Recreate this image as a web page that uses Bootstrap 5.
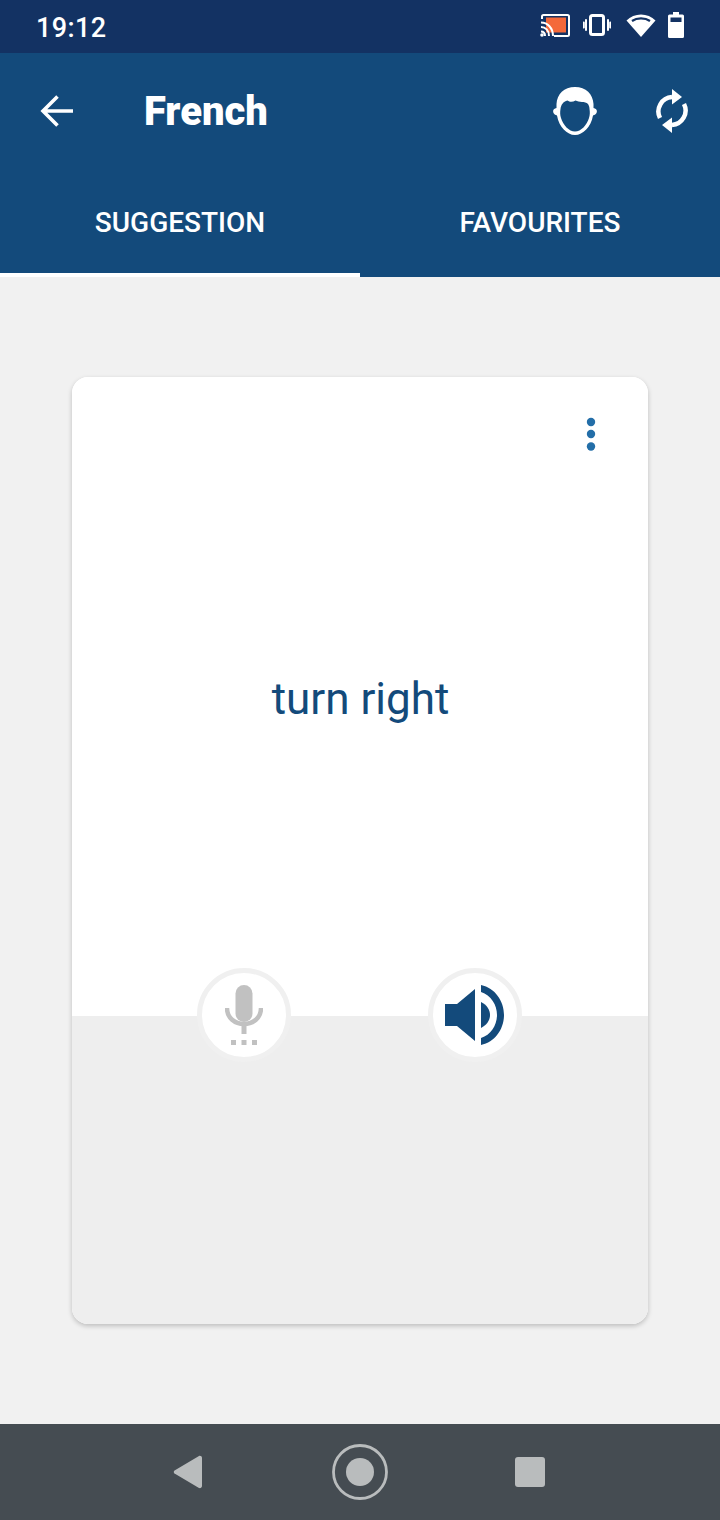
<!DOCTYPE html>
<html lang="en">
<head>
    <meta charset="UTF-8">
    <meta name="viewport" content="width=device-width, initial-scale=1.0">
    <title>French</title>
    <link href="https://cdn.jsdelivr.net/npm/bootstrap@5.3.0/dist/css/bootstrap.min.css" rel="stylesheet">
    <style>
        html, body {
            height: 100%;
        }
        body {
            background-color: #f1f1f1;
            font-family: Roboto, "Liberation Sans", sans-serif;
            overflow: hidden;
        }
        .phone {
            height: 1520px;
        }
        .status-bar {
            height: 53px;
            background-color: #133263;
            padding: 0 36px 0 36px;
        }
        .status-time {
            font-size: 27px;
            font-weight: 500;
            letter-spacing: .4px;
            padding-top: 3px;
        }
        .status-icons {
            padding-bottom: 3px;
        }
        .app-bar {
            background-color: #134a7b;
        }
        .tool-row {
            height: 115px;
            padding: 0 31px 0 40px;
        }
        .app-title {
            font-size: 40px;
            font-weight: 900;
            margin: 2px 0 0 71px;
            line-height: 1;
        }
        .tab-row {
            height: 109px;
        }
        .tab-item {
            width: 50%;
            padding-top: 4px;
            font-size: 28px;
            font-weight: 500;
            color: #fff;
            border-bottom: 4px solid transparent;
        }
        .tab-item.on {
            border-bottom-color: #fff;
        }
        .page-body {
            padding: 100px 72px;
        }
        .word-card {
            border: 0;
            border-radius: 16px;
            box-shadow: 0 2px 5px rgba(0, 0, 0, .22);
            overflow: visible;
        }
        .word-top {
            height: 639px;
            background-color: #fff;
            border-radius: 16px 16px 0 0;
            padding: 40px 51px 0 0;
        }
        .word-text {
            font-size: 44px;
            color: #134a7b;
            margin-top: 222px;
            margin-left: 52px;
            line-height: 1.2;
        }
        .word-bottom {
            height: 308px;
            background-color: #eeeeee;
            border-radius: 0 0 16px 16px;
        }
        .round-btn {
            position: absolute;
            top: 591px;
            width: 94px;
            height: 94px;
            background-color: #fff;
            border: 5px solid #f0f0f0;
            border-radius: 50%;
        }
        .round-mic {
            left: 125px;
        }
        .round-speaker {
            left: 356px;
        }
        .nav-bar {
            height: 96px;
            padding-right: 2px;
            background-color: #454c52;
        }
        .vib-icon { margin-left: 13px; }
        .wifi-icon { margin-left: 15px; }
        .batt-icon { margin-left: 12px; }
        .sync-icon { margin-left: 58px; }
        .nav-back { margin-right: 129px; }
        .nav-square { margin-left: 127px; }
    </style>
</head>
<body>
    <div class="phone d-flex flex-column">
        <div class="status-bar d-flex align-items-center justify-content-between text-white">
            <span class="status-time">19:12</span>
            <div class="status-icons d-flex align-items-center">
                <svg width="30" height="24" viewBox="0 0 30 24">
                    <rect x="6" y="4.500" width="20" height="15" fill="#f4693a"/>
                    <path d="M2 6V3.500A1.500 1.500 0 0 1 3.500 2H27.500A1.500 1.500 0 0 1 29 3.500V21.500A1.500 1.500 0 0 1 27.500 23H14" fill="none" stroke="#fff" stroke-width="2"/>
                    <path d="M1 9.500C7.500 9.500 13 15 13 23M1 14C5.500 14 9 17.500 9 23M1 18.500C3.500 18.500 5 20.500 5 23" fill="none" stroke="#fff" stroke-width="2"/>
                    <circle cx="2" cy="22" r="1.800" fill="#fff"/>
                </svg>
                <svg width="28" height="22" viewBox="0 0 28 22" class="vib-icon">
                    <rect x="7.500" y="1.500" width="13" height="19" rx="2" fill="none" stroke="#fff" stroke-width="3"/>
                    <path d="M3 6V16M0.800 8.500V13.500M25 6V16M27.200 8.500V13.500" stroke="#fff" stroke-width="2" stroke-linecap="round"/>
                </svg>
                <svg width="30" height="26" viewBox="0 0 30 26" class="wifi-icon">
                    <path d="M15 25L0.500 8.500C8 0.500 22 0.500 29.500 8.500Z" fill="#fff"/>
                    <path d="M6 9C11 5.500 19 5.500 24 9" fill="none" stroke="#133263" stroke-width="2.200"/>
                </svg>
                <svg width="16" height="26" viewBox="0 0 16 26" class="batt-icon">
                    <path d="M5 0H11V2.500H14.500A1.500 1.500 0 0 1 16 4V24.500A1.500 1.500 0 0 1 14.500 26H1.500A1.500 1.500 0 0 1 0 24.500V4A1.500 1.500 0 0 1 1.500 2.500H5Z" fill="#fff"/>
                    <rect x="2.500" y="5.500" width="11" height="4.500" fill="#133263"/>
                </svg>
            </div>
        </div>

        <div class="app-bar text-white">
            <div class="tool-row d-flex align-items-center">
                <svg width="33" height="34" viewBox="0 0 33 34">
                    <path d="M33 17H3.500M17.500 2.500L3 17L17.500 31.500" fill="none" stroke="#fff" stroke-width="3.600"/>
                </svg>
                <h1 class="app-title">French</h1>
                <svg class="face-icon ms-auto" width="44" height="48" viewBox="0 0 44 48">
                    <path d="M22 0C33 0 40 7 40.500 17L40.500 21C43.500 21.500 44.500 23.500 43.500 26C42.500 27.500 41.500 28 40 28.500C38 40 30 48 22 48C14 48 6 40 4 28.500C2.500 28 1.500 27.500 0.500 26C-0.500 23.500 0.500 21.500 3.500 21L3.500 17C4 7 11 0 22 0Z" fill="#fff"/>
                    <path d="M7.500 22C8 18 10 14.500 14.500 13.500C17 15.500 20 15 22.500 13.500C26 15.500 32 14 35 17C36 19 36.500 20 36.500 22C37 25 37 28 36 31C34 38 28 44.500 22 44.500C16 44.500 10 38 8 31C7 28 7 25 7.500 22Z" fill="#134a7b"/>
                </svg>
                <svg class="sync-icon" width="34" height="44" viewBox="0 0 34 44">
                    <path d="M5 29A14.500 14.500 0 0 1 17 8M29 15A14.500 14.500 0 0 1 17 36" fill="none" stroke="#fff" stroke-width="4.500"/>
                    <path d="M17 0L27 8L17 15.500ZM17 28.500L7 36L17 44Z" fill="#fff"/>
                </svg>
            </div>
            <div class="tab-row d-flex">
                <div class="tab-item on d-flex align-items-center justify-content-center">SUGGESTION</div>
                <div class="tab-item d-flex align-items-center justify-content-center">FAVOURITES</div>
            </div>
        </div>

        <div class="page-body flex-grow-1">
            <div class="card word-card position-relative">
                <div class="word-top text-center">
                    <div class="d-flex justify-content-end">
                        <svg width="12" height="34" viewBox="0 0 12 34">
                            <circle cx="6" cy="5" r="4.200" fill="#236ea8"/>
                            <circle cx="6" cy="17" r="4.200" fill="#236ea8"/>
                            <circle cx="6" cy="29.500" r="4.200" fill="#236ea8"/>
                        </svg>
                    </div>
                    <div class="word-text">turn right</div>
                </div>
                <div class="word-bottom"></div>

                <div class="round-btn round-mic d-flex align-items-center justify-content-center">
                    <svg width="38" height="60" viewBox="0 0 38 60">
                        <rect x="10.500" y="0" width="17" height="37" rx="8.500" fill="#c1c1c1"/>
                        <path d="M2 23C2 33 10 39 19 39C28 39 36 33 36 23" fill="none" stroke="#c1c1c1" stroke-width="4.500"/>
                        <rect x="16.500" y="40" width="5" height="9" fill="#c1c1c1"/>
                        <path d="M6 55h5v5h-5zM16.500 55h5v5h-5zM27 55h5v5h-5z" fill="#c1c1c1"/>
                    </svg>
                </div>
                <div class="round-btn round-speaker d-flex align-items-center justify-content-center">
                    <svg width="62" height="60" viewBox="0 0 62 60">
                        <path d="M1 19H13L31 4V56L13 41H1Z" fill="#134a7b"/>
                        <path d="M37 17C43 20 46 25 46 30C46 35 43 40 37 43Z" fill="#134a7b"/>
                        <path d="M37 0C51 3 60 16 60 30C60 44 51 57 37 60V53C47 50 53 40 53 30C53 20 47 10 37 7Z" fill="#134a7b"/>
                    </svg>
                </div>
            </div>
        </div>

        <div class="nav-bar d-flex align-items-center justify-content-center">
            <svg width="30" height="34" viewBox="0 0 30 34" class="nav-back">
                <path d="M1.500 15.500L26 1C27.500 0.500 29 1.500 29 3V31C29 32.500 27.500 33.500 26 33L1.500 18.500C0.500 17.500 0.500 16.500 1.500 15.500Z" fill="#b9bcbd"/>
            </svg>
            <svg width="56" height="56" viewBox="0 0 56 56">
                <circle cx="28" cy="28" r="26.500" fill="none" stroke="#b9bcbd" stroke-width="2.800"/>
                <circle cx="28" cy="28" r="14" fill="#b9bcbd"/>
            </svg>
            <svg width="30" height="30" viewBox="0 0 30 30" class="nav-square">
                <rect width="30" height="30" rx="3" fill="#b9bcbd"/>
            </svg>
        </div>
    </div>
    <script src="https://cdn.jsdelivr.net/npm/bootstrap@5.3.0/dist/js/bootstrap.bundle.min.js"></script>
</body>
</html>
